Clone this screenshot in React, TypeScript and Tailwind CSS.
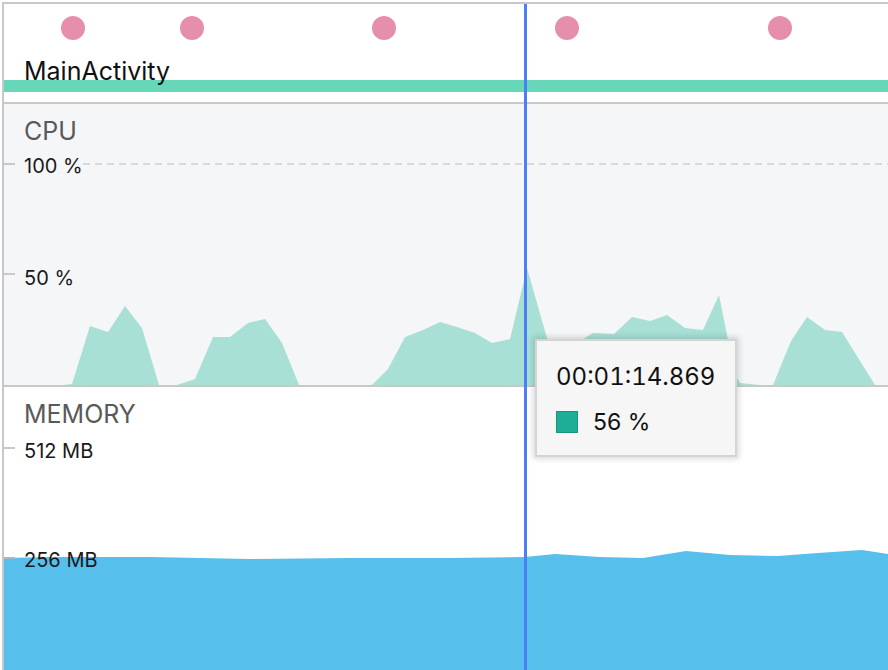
const dots = [73, 192, 384, 567, 780];

const cpuPoints =
  "3,386 3,385 63,385 72,384 90,326 108,332 125,306 142,328 159,385 177,385 195,379 213,337 230,337 248,323 265,319 282,343 299,385 372,385 388,369 405,337 423,330 440,322 457,327 475,333 492,343 510,339 527,268 547,338 562,352 578,342 593,333 614,334 632,317 650,321 667,315 685,328 703,330 719,295 728,340 735,375 740,383 760,385 773,385 791,341 807,317 825,330 842,332 875,385 888,385 888,386";

const memPoints =
  "4,558 50,557 150,557 250,559 350,558 450,558 525,557 555,554 600,557 643,558 686,551 730,555 778,556 818,553 862,550 888,554 888,670 4,670";

function EventsTrack() {
  return (
    <div className="relative h-[100px] flex flex-col border-b-2 border-[#c8c8c8]">
      <svg className="absolute inset-0 w-full h-[98px]" viewBox="4 4 884 98" preserveAspectRatio="none">
        {dots.map((x) => (
          <circle key={x} cx={x} cy={28} r={12} fill="#e68fad" />
        ))}
      </svg>
      <span className="relative z-10 mt-[52px] pl-[20px] text-[25px] leading-[30px] text-[#111]">
        MainActivity
      </span>
      <div className="-mt-[6px] h-[12px] bg-[#66d8b7]" />
    </div>
  );
}

function CpuTrack() {
  return (
    <div className="relative h-[283px] bg-[#f5f6f8] border-b-2 border-[#c8c8c8] flex flex-col pl-[20px]">
      <svg className="absolute inset-0 w-full h-[281px]" viewBox="4 104 884 281" preserveAspectRatio="none">
        <polygon points={cpuPoints} fill="#a8e0d6" />
        <line x1={83} y1={164} x2={888} y2={164} stroke="#d0d0d0" strokeWidth={1.5} strokeDasharray="7 5" />
        <line x1={4} y1={164} x2={15} y2={164} stroke="#c8c8c8" strokeWidth={2} />
        <line x1={4} y1={274} x2={15} y2={274} stroke="#c8c8c8" strokeWidth={2} />
      </svg>
      <span className="relative mt-[12px] text-[25px] leading-[30px] text-[#5a5a5a]">CPU</span>
      <span className="relative mt-[8px] text-[20px] leading-[24px] text-[#1a1a1a]">100 %</span>
      <span className="relative mt-[88px] text-[20px] leading-[24px] text-[#1a1a1a]">50 %</span>
    </div>
  );
}

function MemoryTrack() {
  return (
    <div className="relative flex-1 flex flex-col pl-[20px]">
      <svg className="absolute inset-0 w-full h-full" viewBox="4 387 884 283" preserveAspectRatio="none">
        <polygon points={memPoints} fill="#57bfec" />
        <line x1={4} y1={448} x2={15} y2={448} stroke="#c8c8c8" strokeWidth={2} />
        <line x1={4} y1={558} x2={15} y2={558} stroke="#a9b9c4" strokeWidth={2} />
      </svg>
      <span className="relative mt-[12px] text-[25px] leading-[30px] text-[#5a5a5a]">MEMORY</span>
      <span className="relative mt-[10px] text-[20px] leading-[24px] text-[#1a1a1a]">512 MB</span>
      <span className="relative mt-[85px] text-[20px] leading-[24px] text-[#1a1a1a]">256 MB</span>
    </div>
  );
}

export default function App() {
  return (
    <div className="relative w-[888px] h-[670px] overflow-hidden bg-white pl-[2px] pt-[2px] font-['Inter',sans-serif]">
      <div className="h-full flex flex-col border-l-2 border-t-2 border-[#c8c8c8]">
        <EventsTrack />
        <CpuTrack />
        <MemoryTrack />
      </div>

      <div className="absolute left-[524px] top-[4px] bottom-0 w-[3px] bg-[#4a7ff6]" />

      <div className="absolute left-[535px] top-[339px] w-[202px] h-[118px] border-2 border-[#d4d4d4] bg-[#f6f6f6] shadow-[0_0_6px_2px_rgba(0,0,0,0.15)] flex flex-col pl-[19px]">
        <span className="mt-[21px] text-[24px] leading-[29px] tabular-nums text-[#111]">00:01:14.869</span>
        <div className="mt-[17px] h-[28px] flex items-center gap-[15px]">
          <div className="w-[22px] h-[22px] bg-[#1eae98] border border-[#17957f]" />
          <span className="text-[23px] leading-[28px] text-[#111]">56 %</span>
        </div>
      </div>
    </div>
  );
}
